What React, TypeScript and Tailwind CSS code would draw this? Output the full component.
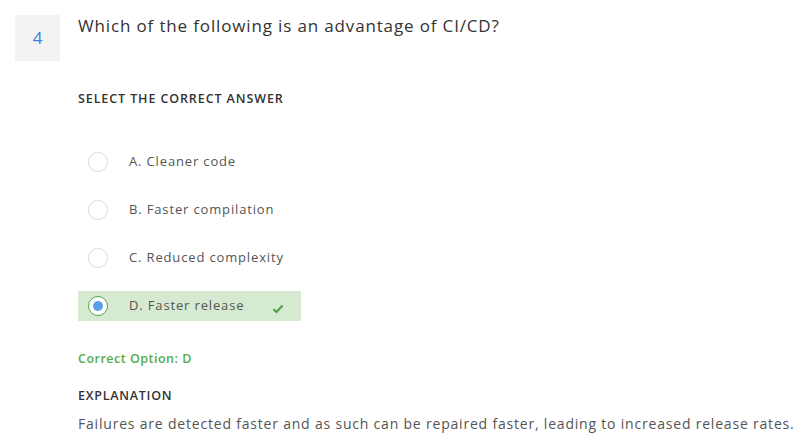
import React from "react";

const options = [
  { label: "A. Cleaner code", selected: false },
  { label: "B. Faster compilation", selected: false },
  { label: "C. Reduced complexity", selected: false },
  { label: "D. Faster release", selected: true },
];

export default function App() {
  return (
    <div
      className="w-[809px] h-[445px] bg-white overflow-hidden"
      style={{ fontFamily: '"Open Sans", sans-serif' }}
    >
      <div className="flex pt-[15px] pl-[15px]">
        <div className="w-[45px] h-[46px] bg-[#f3f3f3] flex items-center justify-center text-[17px] text-[#3b7fe0]">
          4
        </div>
        <div className="ml-[18px] flex-1">
          <div className="text-[17px] leading-[22px] tracking-[0.85px] text-[#333]">
            Which of the following is an advantage of CI/CD?
          </div>
        </div>
      </div>
      <div className="pl-[78px]">
        <div className="mt-[30px] text-[12.5px] font-semibold tracking-[0.9px] text-[#333] leading-[16px]">
          SELECT THE CORRECT ANSWER
        </div>
        <div className="mt-[40px] flex flex-col gap-[18px]">
          {options.map((o) => (
            <div
              key={o.label}
              className={
                "w-[223px] h-[30px] flex items-center " +
                (o.selected ? "bg-[#d5ead1]" : "")
              }
            >
              <div
                className={
                  "ml-[10px] w-[20px] h-[20px] rounded-full border flex items-center justify-center " +
                  (o.selected ? "border-[#55a64f] bg-white" : "border-[#dcdcdc] bg-white")
                }
              >
                {o.selected && <div className="w-[10px] h-[10px] rounded-full bg-[#5aa0e6]" />}
              </div>
              <div className="ml-[21px] text-[13px] tracking-[0.85px] text-[#555]">{o.label}</div>
              {o.selected && (
                <svg className="ml-[28px] mt-[6px]" width="12" height="10" viewBox="0 0 12 10">
                  <path d="M1.5 5.2 L4.5 8 L10.5 1.5" fill="none" stroke="#4fa33f" strokeWidth="2.2" />
                </svg>
              )}
            </div>
          ))}
        </div>
        <div className="mt-[30px] text-[12.5px] font-semibold tracking-[0.5px] text-[#54ad45] leading-[16px]">
          Correct Option: D
        </div>
        <div className="mt-[21px] text-[12.5px] font-semibold tracking-[0.75px] text-[#333] leading-[16px]">
          EXPLANATION
        </div>
        <div className="mt-[10px] text-[14px] tracking-[0.8px] text-[#555] leading-[20px] whitespace-nowrap">
          Failures are detected faster and as such can be repaired faster, leading to increased release rates.
        </div>
      </div>
    </div>
  );
}
